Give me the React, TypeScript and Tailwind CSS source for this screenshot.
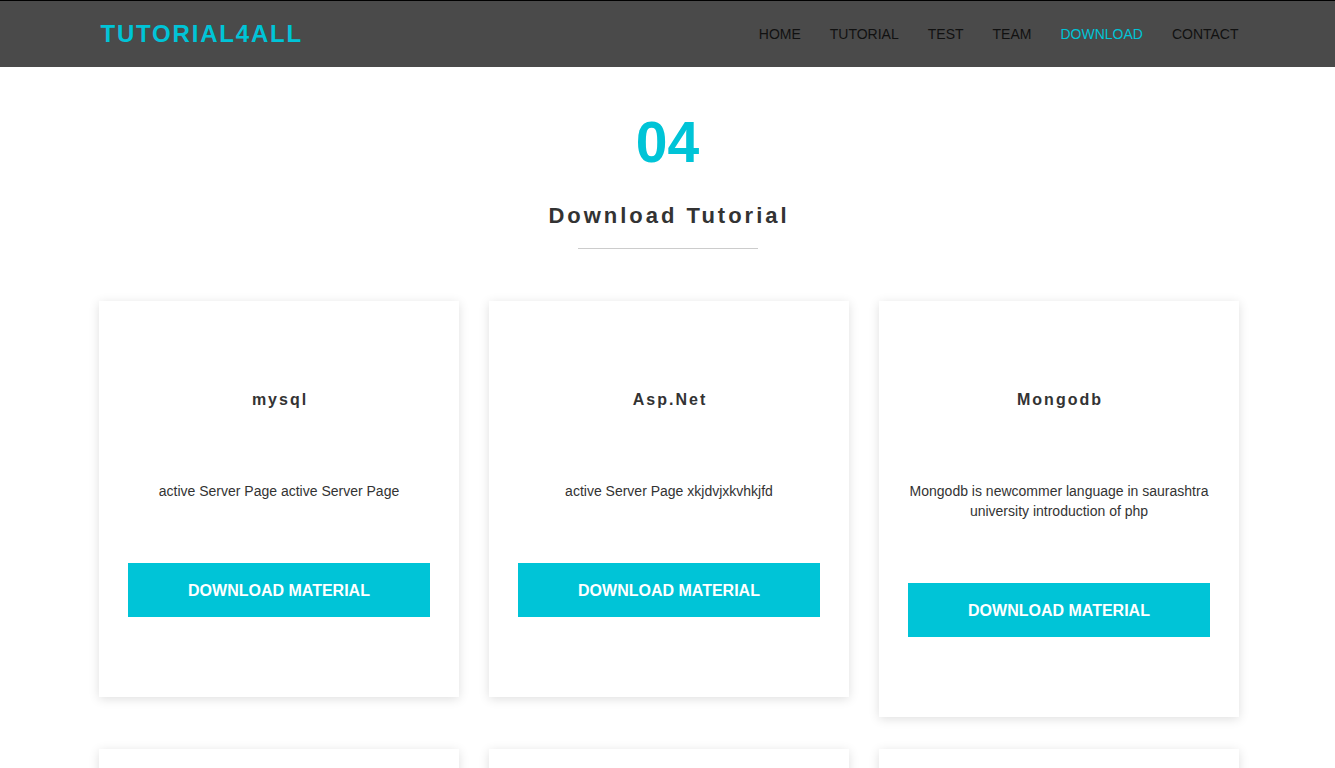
import React from "react";

const cards = [
  { title: "mysql", desc: "active Server Page active Server Page" },
  { title: "Asp.Net", desc: "active Server Page xkjdvjxkvhkjfd" },
  { title: "Mongodb", desc: "Mongodb is newcommer language in saurashtra university introduction of php" },
  { title: "php", desc: "introduction of php" },
  { title: "java", desc: "introduction of java" },
  { title: "python", desc: "introduction of python" },
];

const nav = ["HOME", "TUTORIAL", "TEST", "TEAM", "DOWNLOAD", "CONTACT"];

export default function App() {
  return (
    <div className="min-h-screen bg-white font-['Liberation_Sans',Arial,sans-serif]">
      <header className="h-[67px] border-t border-black bg-[#4a4a4a]">
        <div className="mx-auto flex h-full w-[1142px] items-center justify-between pl-[4px]">
          <div className="text-[24px] font-bold leading-none tracking-[1.8px] text-[#00c4d7]">TUTORIAL4ALL</div>
          <nav className="flex items-center gap-[29px] text-[14px] leading-none">
            {nav.map((n) => (
              <span key={n} className={n === "DOWNLOAD" ? "text-[#00c4d7]" : "text-[#111111]"}>
                {n}
              </span>
            ))}
          </nav>
        </div>
      </header>

      <section className="flex flex-col items-center pt-[45px]">
        <div className="text-[57px] font-bold leading-[60px] text-[#00c4d7]">04</div>
        <h2 className="mt-[29px] pl-[3px] text-[22px] font-bold leading-[30px] tracking-[3px] text-[#333333]">
          Download Tutorial
        </h2>
        <div className="mt-[17px] h-px w-[180px] bg-[#cccccc]" />
      </section>

      <div className="ml-[99px] mt-[52px] grid w-[1140px] grid-cols-3 items-start gap-x-[30px] gap-y-[32px] pb-10">
        {cards.map((c) => (
          <div
            key={c.title}
            className="flex flex-col items-center bg-white px-[29px] pb-[80px] pt-[89px] text-center shadow-[0_2px_10px_rgba(0,0,0,0.13)]"
          >
            <h3 className="pl-[2px] text-[16px] font-bold leading-[20px] tracking-[2px] text-[#333333]">{c.title}</h3>
            <p className="mt-[71px] text-[14px] leading-[20px] text-[#333333]">{c.desc}</p>
            <button className="mt-[62px] flex h-[54px] w-full items-center justify-center bg-[#00c4d7] pt-[2px] text-[16px] font-bold uppercase leading-none text-white">
              Download Material
            </button>
          </div>
        ))}
      </div>
    </div>
  );
}
